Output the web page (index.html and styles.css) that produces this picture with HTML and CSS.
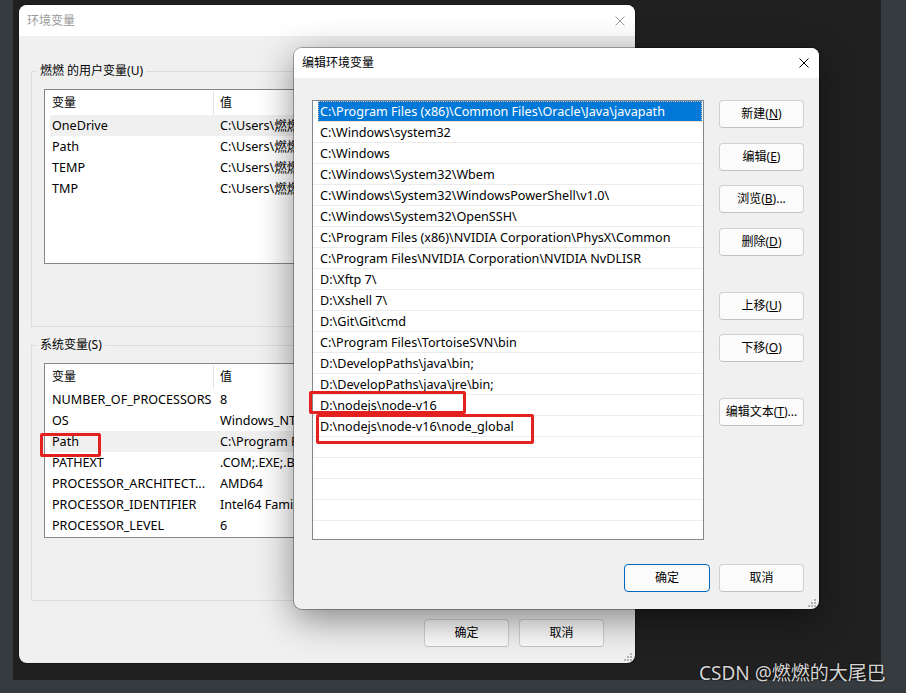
FILE: index.html
```html
<!DOCTYPE html>
<html lang="zh-CN">
<head>
    <meta charset="UTF-8">
    <title>环境变量</title>
    <link rel="stylesheet" href="styles.css">
</head>
<body>
<div class="desktop">

    <!-- 环境变量 (behind) -->
    <div class="window env-window">
        <div class="titlebar">
            <span class="title">环境变量</span>
            <svg class="close" width="10" height="10" viewBox="0 0 10 10"><path d="M0.5 0.5L9.5 9.5M9.5 0.5L0.5 9.5"/></svg>
        </div>
        <div class="env-body">
            <div class="group">
                <div class="group-title">燃燃 的用户变量(U)</div>
                <div class="varlist">
                    <div class="var-head"><span class="col-name">变量</span><span class="col-value">值</span></div>
                    <div class="var-row hover"><span class="col-name">OneDrive</span><span class="col-value">C:\Users\燃燃\OneDrive</span></div>
                    <div class="var-row"><span class="col-name">Path</span><span class="col-value">C:\Users\燃燃\AppData\Local\Microsoft\WindowsApps;</span></div>
                    <div class="var-row"><span class="col-name">TEMP</span><span class="col-value">C:\Users\燃燃\AppData\Local\Temp</span></div>
                    <div class="var-row"><span class="col-name">TMP</span><span class="col-value">C:\Users\燃燃\AppData\Local\Temp</span></div>
                </div>
            </div>
            <div class="group system-group">
                <div class="group-title">系统变量(S)</div>
                <div class="varlist">
                    <div class="var-head"><span class="col-name">变量</span><span class="col-value">值</span></div>
                    <div class="var-row"><span class="col-name">NUMBER_OF_PROCESSORS</span><span class="col-value">8</span></div>
                    <div class="var-row"><span class="col-name">OS</span><span class="col-value">Windows_NT</span></div>
                    <div class="var-row hover"><span class="col-name">Path</span><span class="col-value">C:\Program Files (x86)\Common Files\Oracle\Java\javapath;</span></div>
                    <div class="var-row"><span class="col-name">PATHEXT</span><span class="col-value">.COM;.EXE;.BAT;.CMD;.VBS;.VBE;.JS;.JSE;.WSF;.WSH;.MSC</span></div>
                    <div class="var-row"><span class="col-name">PROCESSOR_ARCHITECT...</span><span class="col-value">AMD64</span></div>
                    <div class="var-row"><span class="col-name">PROCESSOR_IDENTIFIER</span><span class="col-value">Intel64 Family 6 Model 140 Stepping 1, GenuineIntel</span></div>
                    <div class="var-row"><span class="col-name">PROCESSOR_LEVEL</span><span class="col-value">6</span></div>
                </div>
            </div>
            <div class="dialog-buttons">
                <button class="btn">确定</button>
                <button class="btn">取消</button>
            </div>
        </div>
        <svg class="grip" width="9" height="9" viewBox="0 0 9 9"><rect x="7" y="1" width="2" height="2"/><rect x="4" y="4" width="2" height="2"/><rect x="7" y="4" width="2" height="2"/><rect x="1" y="7" width="2" height="2"/><rect x="4" y="7" width="2" height="2"/><rect x="7" y="7" width="2" height="2"/></svg>
    </div>

    <!-- 编辑环境变量 (front) -->
    <div class="window edit-window">
        <div class="titlebar">
            <span class="title">编辑环境变量</span>
            <svg class="close" width="10" height="10" viewBox="0 0 10 10"><path d="M0.5 0.5L9.5 9.5M9.5 0.5L0.5 9.5"/></svg>
        </div>
        <div class="edit-body">
            <div class="edit-main">
                <div class="path-list">
                    <div class="path-row selected">C:\Program Files (x86)\Common Files\Oracle\Java\javapath</div>
                    <div class="path-row">C:\Windows\system32</div>
                    <div class="path-row">C:\Windows</div>
                    <div class="path-row">C:\Windows\System32\Wbem</div>
                    <div class="path-row">C:\Windows\System32\WindowsPowerShell\v1.0\</div>
                    <div class="path-row">C:\Windows\System32\OpenSSH\</div>
                    <div class="path-row">C:\Program Files (x86)\NVIDIA Corporation\PhysX\Common</div>
                    <div class="path-row">C:\Program Files\NVIDIA Corporation\NVIDIA NvDLISR</div>
                    <div class="path-row">D:\Xftp 7\</div>
                    <div class="path-row">D:\Xshell 7\</div>
                    <div class="path-row">D:\Git\Git\cmd</div>
                    <div class="path-row">C:\Program Files\TortoiseSVN\bin</div>
                    <div class="path-row">D:\DevelopPaths\java\bin;</div>
                    <div class="path-row">D:\DevelopPaths\java\jre\bin;</div>
                    <div class="path-row">D:\nodejs\node-v16</div>
                    <div class="path-row">D:\nodejs\node-v16\node_global</div>
                    <div class="path-row"></div>
                    <div class="path-row"></div>
                    <div class="path-row"></div>
                    <div class="path-row"></div>
                    <div class="path-row"></div>
                </div>
                <div class="side-buttons">
                    <button class="btn">新建(<u>N</u>)</button>
                    <button class="btn nudge">编辑(<u>E</u>)</button>
                    <button class="btn">浏览(<u>B</u>)...</button>
                    <button class="btn nudge">删除(<u>D</u>)</button>
                    <button class="btn spaced">上移(<u>U</u>)</button>
                    <button class="btn">下移(<u>O</u>)</button>
                    <button class="btn spaced">编辑文本(<u>T</u>)...</button>
                </div>
            </div>
            <div class="dialog-buttons">
                <button class="btn default">确定</button>
                <button class="btn">取消</button>
            </div>
        </div>
        <svg class="grip" width="9" height="9" viewBox="0 0 9 9"><rect x="7" y="1" width="2" height="2"/><rect x="4" y="4" width="2" height="2"/><rect x="7" y="4" width="2" height="2"/><rect x="1" y="7" width="2" height="2"/><rect x="4" y="7" width="2" height="2"/><rect x="7" y="7" width="2" height="2"/></svg>
    </div>

    <!-- red marks -->
    <div class="mark mark-path"></div>
    <div class="mark mark-node"></div>
    <div class="mark mark-global"></div>

    <div class="watermark">CSDN @燃燃的大尾巴</div>
</div>
</body>
</html>
```

FILE: styles.css
```css
body {
    margin: 0;
    font-family: "Noto Sans", "Noto Sans CJK SC", sans-serif;
    font-size: 12px;
    line-height: 16px;
    color: #000;
}

.desktop {
    position: relative;
    width: 906px;
    height: 693px;
    overflow: hidden;
    background: linear-gradient(#202020, #202020) 13px 0 / 868px 680px no-repeat, #363b3f;
}

/* windows */
.window {
    position: absolute;
    box-sizing: border-box;
    background: #f0f0f0;
    border-radius: 8px;
    overflow: hidden;
    box-shadow: 0 0 0 1px rgba(0, 0, 0, 0.25);
}
.env-window {
    left: 19px;
    top: 5px;
    width: 616px;
    height: 658px;
}
.edit-window {
    left: 294px;
    top: 48px;
    width: 525px;
    height: 561px;
    box-shadow: 0 0 0 1px rgba(0, 0, 0, 0.3), 0 10px 36px rgba(0, 0, 0, 0.45);
}

.titlebar {
    height: 31px;
    background: #fff;
    display: flex;
    align-items: center;
    justify-content: space-between;
    padding: 0 10px 0 8px;
}
.edit-window .titlebar {
    height: 30px;
}
.env-window .title {
    color: #9a9a9a;
}
.close {
    fill: none;
    stroke: #000;
    stroke-width: 1;
}
.env-window .close {
    stroke: #999;
}

.grip {
    position: absolute;
    right: 3px;
    bottom: 2px;
    fill: #b4b4b4;
}

/* buttons */
.btn {
    box-sizing: border-box;
    height: 28px;
    width: 85px;
    padding: 0;
    font: inherit;
    color: #000;
    background: #fbfbfb;
    border: 1px solid #d0d0d0;
    border-bottom-color: #c2c2c2;
    border-radius: 4px;
}
.btn.default {
    width: 86px;
    border-color: #0067c0;
}
.dialog-buttons {
    display: flex;
    justify-content: flex-end;
    gap: 10px;
}

/* 环境变量 body */
.env-body {
    padding: 35px 12px 0;
}
.group {
    box-sizing: border-box;
    height: 256px;
    border: 1px solid #dcdcdc;
    padding: 0 12px;
}
.system-group {
    margin-top: 18px;
}
.group-title {
    width: fit-content;
    margin: -9px 0 0 -7px;
    padding: 0 3px;
    background: #f0f0f0;
}
/* only the left part shows, the rest sits under the edit dialog */
.varlist {
    box-sizing: border-box;
    width: 260px;
    height: 175px;
    margin-top: 10px;
    background: #fff;
    border: 1px solid #828790;
    overflow: hidden;
}
.var-head {
    display: flex;
    height: 25px;
    align-items: center;
}
.var-head .col-name {
    width: 161px;
    padding-left: 7px;
    border-right: 1px solid #e5e5e5;
    line-height: 24px;
}
.var-head .col-value {
    padding-left: 6px;
}
.var-row {
    display: flex;
    height: 21px;
    align-items: center;
    margin-left: 5px;
    padding-left: 2px;
    font-size: 12.6px;
    white-space: nowrap;
}
.var-row.hover {
    background: #f0f0f0;
}
.var-row .col-name {
    flex: none;
    width: 168px;
}
.var-row .col-value {
    overflow: hidden;
}
.env-window .dialog-buttons {
    margin-top: 18px;
    margin-right: 19px;
}

/* 编辑环境变量 body */
.edit-body {
    padding: 22px 15px 0 18px;
}
.edit-main {
    display: flex;
    gap: 15px;
}
.path-list {
    box-sizing: border-box;
    width: 392px;
    height: 440px;
    background: #fff;
    border: 1px solid #828790;
    overflow: hidden;
}
.path-row {
    box-sizing: border-box;
    height: 21px;
    padding: 1px 0 0 7px;
    font-size: 12.6px;
    line-height: 19px;
    border-bottom: 1px solid #ebebeb;
    white-space: nowrap;
}
.path-row.selected {
    margin: 0 1px 0 5px;
    padding-left: 2px;
    background: #0078d7;
    color: #fff;
    outline: 1px dotted rgba(255, 210, 160, 0.8);
    outline-offset: -1px;
}
.side-buttons {
    display: flex;
    flex-direction: column;
    gap: 14px;
}
.side-buttons .nudge {
    margin-top: 1px;
}
.side-buttons .spaced {
    margin-top: 22px;
}
.edit-window .dialog-buttons {
    margin-top: 24px;
    gap: 9px;
}

/* annotations */
.mark {
    position: absolute;
    box-sizing: border-box;
    border: 3px solid #e3211f;
    border-radius: 2px;
}
.mark-path {
    left: 40px;
    top: 433px;
    width: 61px;
    height: 24px;
}
.mark-node {
    left: 309px;
    top: 391px;
    width: 157px;
    height: 23px;
}
.mark-global {
    left: 316px;
    top: 414px;
    width: 218px;
    height: 30px;
}

.watermark {
    position: absolute;
    left: 699px;
    top: 662px;
    font-size: 19px;
    line-height: 22px;
    color: #d4d4d4;
    text-shadow: 0 0 2px #000;
    white-space: nowrap;
}
```
